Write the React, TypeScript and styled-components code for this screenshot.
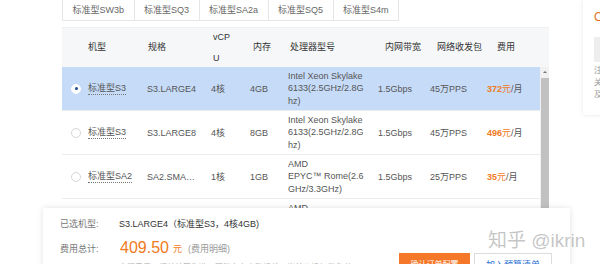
import styled, { createGlobalStyle } from "styled-components";

const GlobalStyle = createGlobalStyle`
  html, body {
    margin: 0;
    padding: 0;
    background: #fff;
  }
  body {
    font-family: "Liberation Sans", "Noto Sans CJK SC", sans-serif;
    font-size: 9px;
    color: #555;
  }
`;

type Row = {
  selected?: boolean;
  family: string;
  spec: string;
  cpu: string;
  mem: string;
  proc: string[];
  bandwidth: string;
  pps: string;
  price: string;
};

const tabs = ["标准型SW3b", "标准型SQ3", "标准型SA2a", "标准型SQ5", "标准型S4m"];

const cols = [20, 59, 64, 39, 38, 90, 52, 57, 59];
const headShift = [0, 0, 1, 2, 3, 2, 7, 7, 10];

const rows: Row[] = [
  {
    selected: true,
    family: "标准型S3",
    spec: "S3.LARGE4",
    cpu: "4核",
    mem: "4GB",
    proc: ["Intel Xeon Skylake", "6133(2.5GHz/2.8G", "hz)"],
    bandwidth: "1.5Gbps",
    pps: "45万PPS",
    price: "372",
  },
  {
    family: "标准型S3",
    spec: "S3.LARGE8",
    cpu: "4核",
    mem: "8GB",
    proc: ["Intel Xeon Skylake", "6133(2.5GHz/2.8G", "hz)"],
    bandwidth: "1.5Gbps",
    pps: "45万PPS",
    price: "496",
  },
  {
    family: "标准型SA2",
    spec: "SA2.SMA…",
    cpu: "1核",
    mem: "1GB",
    proc: ["AMD", "EPYC™ Rome(2.6", "GHz/3.3GHz)"],
    bandwidth: "1.5Gbps",
    pps: "25万PPS",
    price: "35",
  },
  {
    family: "标准型SA2",
    spec: "SA2.MEDI…",
    cpu: "2核",
    mem: "2GB",
    proc: ["AMD", "EPYC™ Rome(2.6", "GHz/3.3GHz)"],
    bandwidth: "1.5Gbps",
    pps: "30万PPS",
    price: "70",
  },
];

export default function App() {
  return (
    <>
      <GlobalStyle />
      <Page>
        <Main>
          <Tabs>
            {tabs.map((t) => (
              <Tab key={t}>{t}</Tab>
            ))}
          </Tabs>

          <Table>
            <Head>
              {["", "机型", "规格", "vCPU", "内存", "处理器型号", "内网带宽", "网络收发包", "费用"].map(
                (h, i) => (
                  <HeadCell key={i} $w={i === 8 ? cols[i] + 9 : cols[i]} $shift={headShift[i]}>
                    {h === "vCPU" ? (
                      <>
                        vCP
                        <br />U
                      </>
                    ) : (
                      h
                    )}
                  </HeadCell>
                )
              )}
            </Head>

            <BodyWrap>
              <Body>
                {rows.map((r, idx) => (
                  <BodyRow key={idx} $selected={r.selected}>
                    <Cell $w={cols[0]}>
                      <Radio $checked={r.selected} />
                    </Cell>
                    <Cell $w={cols[1]}>
                      <Family>{r.family}</Family>
                    </Cell>
                    <Cell $w={cols[2]}>{r.spec}</Cell>
                    <Cell $w={cols[3]}>{r.cpu}</Cell>
                    <Cell $w={cols[4]}>{r.mem}</Cell>
                    <Cell $w={cols[5]}>
                      <Proc>
                        {r.proc.map((l) => (
                          <span key={l}>{l}</span>
                        ))}
                      </Proc>
                    </Cell>
                    <Cell $w={cols[6]}>{r.bandwidth}</Cell>
                    <Cell $w={cols[7]}>{r.pps}</Cell>
                    <Cell $w={cols[8]}>
                      <Price>
                        <b>{r.price}</b>元
                      </Price>
                      /月
                    </Cell>
                  </BodyRow>
                ))}
              </Body>
              <Scrollbar>
                <ScrollArrow />
                <Thumb />
              </Scrollbar>
            </BodyWrap>
          </Table>
        </Main>

        <SideCard>
          <SideTitle>C</SideTitle>
          <SideBox />
          <SideNote>
            <span>注</span>
            <span>关</span>
            <span>及</span>
          </SideNote>
        </SideCard>

        <OrderBar>
          <Info>
            <InfoRow>
              <Label>已选机型:</Label>
              <Value>S3.LARGE4（标准型S3，4核4GB)</Value>
            </InfoRow>
            <InfoRow $tall>
              <Label>费用总计:</Label>
              <Total>409.50</Total>
              <Unit>元</Unit>
              <Detail>(费用明细)</Detail>
            </InfoRow>
            <Note>实际费用以订单结算为准，可能存在小数误差，当前价格仅供参考</Note>
          </Info>
          <Actions>
            <BuyButton>确认订单配置</BuyButton>
            <GhostButton>加入预算清单</GhostButton>
          </Actions>
        </OrderBar>

        <Watermark>知乎 @ikrin</Watermark>
      </Page>
    </>
  );
}

const Page = styled.div`
  position: relative;
  width: 600px;
  height: 264px;
  overflow: hidden;
  display: flex;
  align-items: flex-start;
`;

const Main = styled.div`
  flex: none;
  width: 583px;
  display: flex;
  flex-direction: column;
`;

const Tabs = styled.div`
  display: flex;
  padding-left: 62px;
`;

const Tab = styled.div`
  height: 20px;
  line-height: 20px;
  padding: 0 9.5px;
  color: #666;
  border: 1px solid #e6e6e6;
  border-top: none;
  & + & {
    border-left: none;
  }
`;

const Table = styled.div`
  margin: 6px 0 0 62px;
  width: 487px;
`;

const Head = styled.div`
  display: flex;
  height: 40px;
  background: #f6f7f9;
  border-top: 1px solid #eef0f2;
  box-sizing: border-box;
`;

const HeadCell = styled.div<{ $w: number; $shift: number }>`
  flex: none;
  width: ${(p) => p.$w}px;
  box-sizing: border-box;
  padding-left: ${(p) => 6 + p.$shift}px;
  display: flex;
  align-items: center;
  line-height: 21px;
  white-space: nowrap;
  color: #333;
`;

const BodyWrap = styled.div`
  display: flex;
`;

const Body = styled.div`
  flex: none;
  width: 478px;
  display: flex;
  flex-direction: column;
`;

const BodyRow = styled.div<{ $selected?: boolean }>`
  display: flex;
  height: 44px;
  box-sizing: border-box;
  border-bottom: 1px solid #ececec;
  background: ${(p) => (p.$selected ? "#c6dbf8" : "#fff")};
`;

const Cell = styled.div<{ $w: number }>`
  flex: none;
  width: ${(p) => p.$w}px;
  box-sizing: border-box;
  padding-left: 6px;
  display: flex;
  align-items: center;
  white-space: nowrap;
  color: #555;
`;

const Radio = styled.span<{ $checked?: boolean }>`
  width: 8px;
  height: 8px;
  margin-left: 3px;
  border-radius: 50%;
  border: 1px solid ${(p) => (p.$checked ? "#fff" : "#d6d6d6")};
  background: #fff;
  position: relative;
  &::after {
    content: "";
    display: ${(p) => (p.$checked ? "block" : "none")};
    position: absolute;
    left: 2.5px;
    top: 2.5px;
    width: 3px;
    height: 3px;
    border-radius: 50%;
    background: #1e4f8f;
  }
`;

const Family = styled.span`
  border-bottom: 1px dotted #777;
  line-height: 11px;
`;

const Proc = styled.div`
  display: flex;
  flex-direction: column;
  line-height: 12.5px;
`;

const Price = styled.span`
  color: #f07a22;
  b {
    font-weight: bold;
  }
`;

const Scrollbar = styled.div`
  flex: none;
  width: 9px;
  background: #f1f1f1;
  display: flex;
  flex-direction: column;
  align-items: center;
`;

const ScrollArrow = styled.div`
  margin-top: 4px;
  width: 0;
  height: 0;
  border-left: 2px solid transparent;
  border-right: 2px solid transparent;
  border-bottom: 2px solid #777;
`;

const Thumb = styled.div`
  margin-top: 5px;
  width: 8px;
  height: 140px;
  background: #c1c1c1;
`;

const SideCard = styled.div`
  flex: none;
  width: 200px;
  height: 115px;
  box-sizing: border-box;
  padding: 10px 0 0 11px;
  background: #fff;
  box-shadow: 0 0 4px rgba(0, 0, 0, 0.1);
  display: flex;
  flex-direction: column;
`;

const SideTitle = styled.div`
  color: #e0701e;
  font-size: 12px;
  line-height: 14px;
`;

const SideBox = styled.div`
  margin-top: 13px;
  height: 25px;
  background: #eeeeee;
`;

const SideNote = styled.div`
  margin-top: 3px;
  display: flex;
  flex-direction: column;
  line-height: 12px;
  color: #999;
  font-size: 8px;
`;

const OrderBar = styled.div`
  position: absolute;
  left: 43px;
  top: 208px;
  width: 527px;
  height: 70px;
  box-sizing: border-box;
  padding: 8px 18px 0 17px;
  background: #fff;
  box-shadow: 0 0 6px rgba(0, 0, 0, 0.12);
  display: flex;
  align-items: flex-start;
`;

const Info = styled.div`
  flex: 1;
  display: flex;
  flex-direction: column;
  gap: 8px;
`;

const InfoRow = styled.div<{ $tall?: boolean }>`
  display: flex;
  align-items: center;
  height: ${(p) => (p.$tall ? 20 : 14)}px;
`;

const Label = styled.span`
  width: 59px;
  flex: none;
  color: #777;
`;

const Value = styled.span`
  color: #333;
`;

const Total = styled.span`
  margin-left: 1px;
  font-size: 16px;
  color: #f07a22;
`;

const Unit = styled.span`
  margin-left: 4px;
  color: #f07a22;
`;

const Detail = styled.span`
  margin-left: 6px;
  color: #999;
`;

const Note = styled.div`
  margin: -5px 0 0 59px;
  font-size: 8px;
  color: #aaa;
  white-space: nowrap;
`;

const Actions = styled.div`
  flex: none;
  display: flex;
  gap: 4px;
  margin-top: 37px;
`;

const BuyButton = styled.div`
  width: 71px;
  height: 24px;
  line-height: 24px;
  text-align: center;
  background: #f5782a;
  color: #fff;
  font-size: 8px;
`;

const GhostButton = styled.div`
  width: 78px;
  height: 24px;
  line-height: 22px;
  box-sizing: border-box;
  text-align: center;
  border: 1px solid #dcdcdc;
  color: #2a6fd4;
  background: #fff;
`;

const Watermark = styled.div`
  position: absolute;
  left: 488px;
  top: 229px;
  font-size: 19px;
  line-height: 24px;
  color: rgba(140, 140, 140, 0.5);
  white-space: nowrap;
`;
